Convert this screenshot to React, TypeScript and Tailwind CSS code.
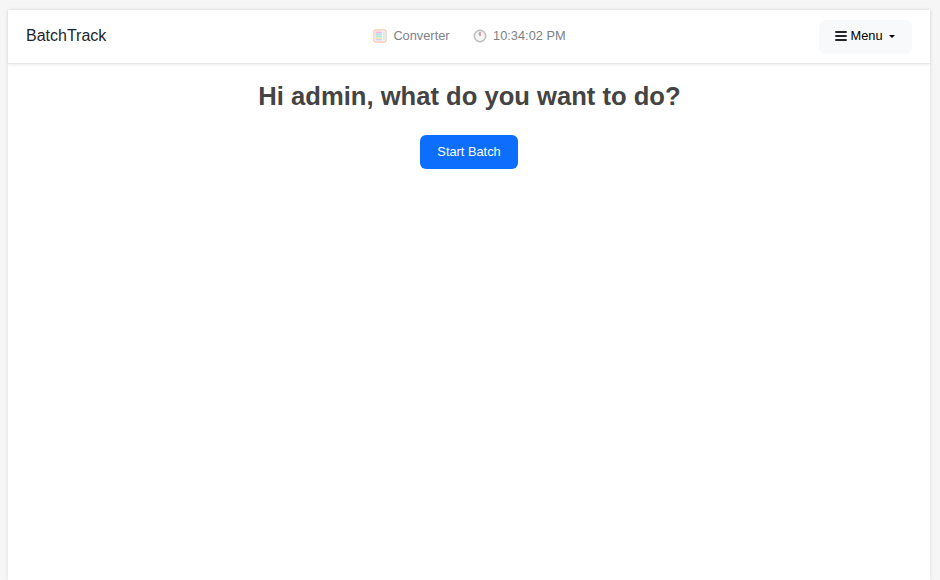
function ConverterIcon() {
  return (
    <svg width="14" height="14" viewBox="0 0 14 14" aria-hidden="true">
      <rect x="1" y="1" width="12" height="12" rx="2" fill="#fffdfb" stroke="#fbcbbb" strokeWidth="1.4" />
      <rect x="2.5" y="2.5" width="6.5" height="2" fill="#fab4e4" />
      <rect x="2.5" y="4.5" width="6.5" height="2" fill="#a9e6f6" />
      <rect x="2.5" y="6.5" width="6.5" height="2" fill="#b3efcf" />
      <rect x="2.5" y="8.5" width="6.5" height="1.5" fill="#fae3aa" />
      <rect x="2.5" y="10" width="6.5" height="1.5" fill="#cdd0fa" />
      <rect x="10.3" y="2.5" width="1.2" height="9" fill="#b5e8dd" />
    </svg>
  );
}

function ClockIcon() {
  return (
    <svg width="14" height="14" viewBox="0 0 14 14" aria-hidden="true">
      <circle cx="7" cy="7" r="5.7" fill="#f6f5f5" stroke="#bfbcbc" strokeWidth="1.5" />
      <path d="M7 2.8V7" stroke="#d66e8b" strokeWidth="1.3" />
      <path d="M5.5 4L7 7" stroke="#c5adb6" strokeWidth="0.9" />
    </svg>
  );
}

function Navbar() {
  return (
    <header className="flex h-[54px] shrink-0 items-center border-b border-[#e8e8e8] pl-[18px] pr-[18px] shadow-[0_1px_3px_rgba(0,0,0,0.07)]">
      <div className="flex-1 pb-px text-base text-[#212529]">BatchTrack</div>
      <nav className="flex items-center gap-[23.5px] pb-px pl-px text-[12.8px] text-[#7c8186]">
        <a className="flex items-center gap-1.5">
          <ConverterIcon />
          <span>Converter</span>
        </a>
        <div className="flex items-center gap-1.5">
          <ClockIcon />
          <span>10:34:02 PM</span>
        </div>
      </nav>
      <div className="flex flex-1 justify-end">
        <button className="flex h-[34px] w-[93px] items-center rounded-[7px] bg-[#f8f9fa] pb-px pl-4 text-[12.8px] text-black">
          <svg width="12" height="12" viewBox="0 0 12 12" className="mr-[3.5px]" aria-hidden="true">
            <path d="M0.3 2H11.7M0.3 6H11.7M0.3 10H11.7" stroke="#212529" strokeWidth="1.8" />
          </svg>
          <span>Menu</span>
          <span className="ml-[6.5px] border-x-[3px] border-t-[3px] border-x-transparent border-t-black" />
        </button>
      </div>
    </header>
  );
}

export default function App() {
  return (
    <div className="h-screen overflow-hidden bg-[#f6f6f6] pl-2 pr-[10px] pt-[10px] font-['Liberation_Sans',Arial,sans-serif]">
      <div className="flex h-full flex-col bg-white shadow-[0_0_4px_rgba(0,0,0,0.1)]">
        <Navbar />
        <main className="flex flex-col items-center pt-4">
          <h1 className="pl-px text-[25.6px] font-bold leading-8 text-[#444444]">Hi admin, what do you want to do?</h1>
          <button className="mt-[23px] h-[34px] w-[98px] rounded-[6px] bg-[#0d6efd] text-[12.8px] text-white">Start Batch</button>
        </main>
      </div>
    </div>
  );
}
